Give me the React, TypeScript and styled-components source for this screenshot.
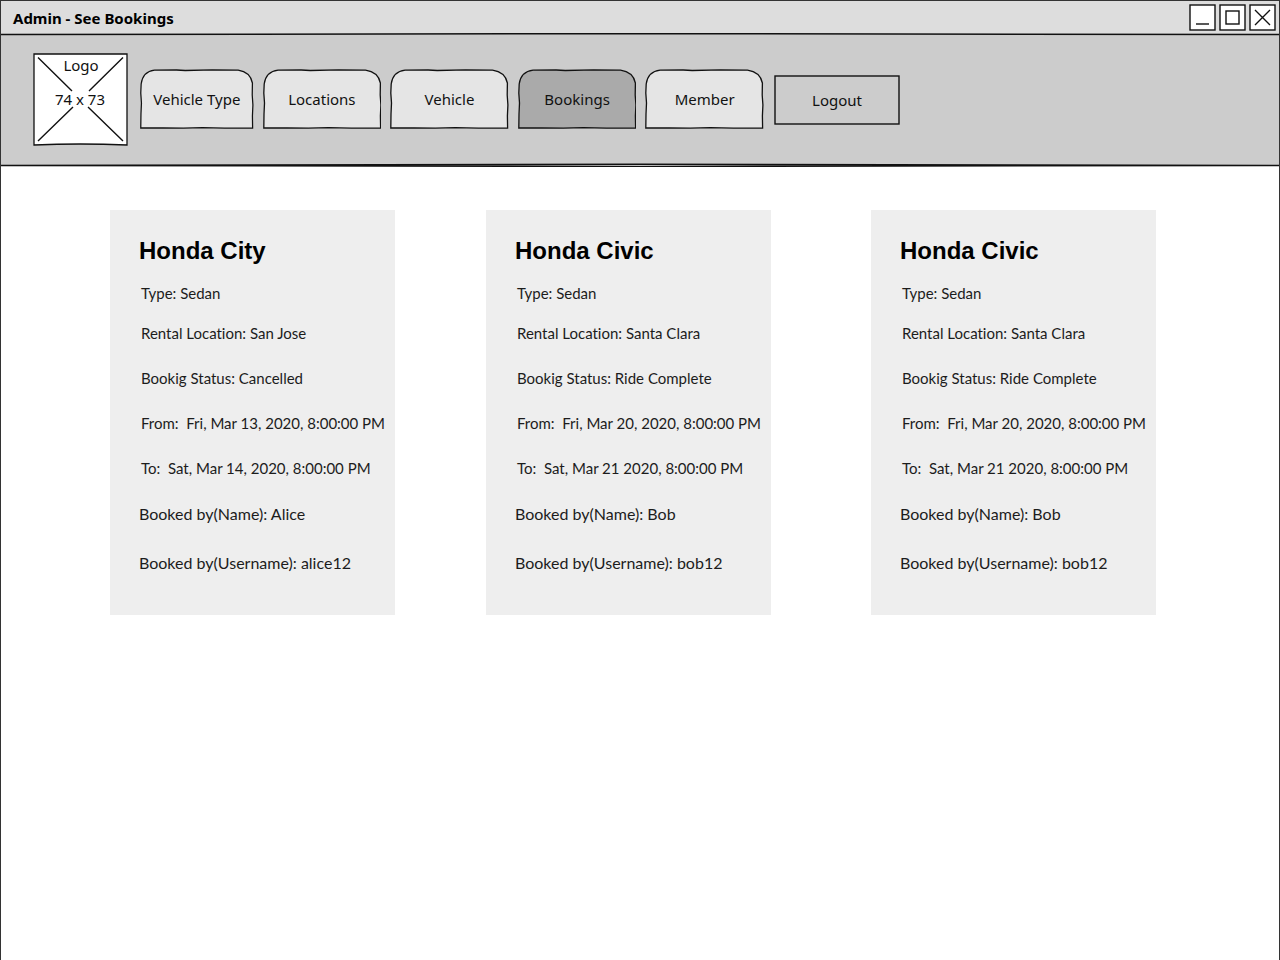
import React from "react";
import styled, { createGlobalStyle } from "styled-components";

const hand = `"Noto Sans", "Open Sans", sans-serif`;
const ink = "#111";

const GlobalStyle = createGlobalStyle`
  *, *::before, *::after { box-sizing: border-box; }
  body { margin: 0; background: #fff; color: #000; font-family: Lato, sans-serif; }
`;

const Window = styled.div`
  display: flex;
  flex-direction: column;
  min-height: 100vh;
  border: 1px solid #333;
  border-bottom: 0;
`;

const TitleBar = styled.header`
  display: flex;
  align-items: center;
  justify-content: space-between;
  height: 33px;
  padding: 0 3px 0 12px;
  background: #ddd;
`;

const WindowTitle = styled.h1`
  margin: 0;
  font: 700 15px/20px ${hand};
`;

const WindowControls = styled.div`
  display: flex;
  gap: 3px;
`;

const ControlButton = styled.button`
  display: block;
  width: 27px;
  height: 27px;
  padding: 0;
  border: 0;
  background: none;
  svg { display: block; }
`;

const Rule = styled.svg`
  display: block;
  width: 100%;
  height: 4px;
  margin: -2px 0;
  position: relative;
  fill: none;
  stroke: ${ink};
`;

const NavBar = styled.nav`
  display: flex;
  align-items: center;
  gap: 10px;
  height: 131px;
  padding: 0 32px;
  background: #ccc;
`;

const Logo = styled.svg`
  flex: none;
  width: 95px;
  height: 94px;
  margin-right: 2px;
  font: 400 15px ${hand};
`;

const TabList = styled.div`
  display: flex;
  flex: 0 1 624px;
  gap: 9px;
  padding-bottom: 2px;
`;

const Tab = styled.button<{ $wide?: boolean }>`
  display: grid;
  place-items: center;
  flex: ${(p) => (p.$wide ? "118 1 0" : "113 1 0")};
  height: 60px;
  padding: 0;
  border: 0;
  background: none;
  color: ${ink};
  font: 400 15px/20px ${hand};
  white-space: nowrap;
  > * { grid-area: 1 / 1; }
`;

const TabShape = styled.svg<{ $active?: boolean }>`
  width: 100%;
  height: 60px;
  fill: ${(p) => (p.$active ? "#aaa" : "#e5e5e5")};
  stroke: ${ink};
  stroke-width: 1.3;
`;

const LogoutButton = styled.button`
  flex: 0 1 126px;
  height: 50px;
  padding: 0;
  border: 0;
  background: none;
  color: ${ink};
  font: 400 15px/20px ${hand};
  display: grid;
  place-items: center;
  > * { grid-area: 1 / 1; }
`;

const LogoutShape = styled.svg`
  width: 100%;
  height: 50px;
  fill: #ccc;
  stroke: ${ink};
  stroke-width: 1.4;
`;

const Board = styled.main`
  display: grid;
  grid-template-columns: 376fr 385fr 408fr;
  padding: 45px 0 44px 109px;
`;

const Card = styled.article`
  display: flex;
  flex-direction: column;
  gap: 25px;
  width: 285px;
  height: 405px;
  padding: 27px 0 0 31px;
  background: #eee;
`;

const CarName = styled.h2`
  margin: 0 0 -2px -2px;
  font: 700 24px/28px "Liberation Sans", sans-serif;
`;

const Facts = styled.div<{ $gap: number; $large?: boolean }>`
  display: flex;
  flex-direction: column;
  gap: ${(p) => p.$gap}px;
  margin: ${(p) => (p.$large ? "1px 0 0 -2px" : "0")};
  color: #1c1c1c;
  font-size: ${(p) => (p.$large ? 16 : 15)}px;
  font-variant-ligatures: none;
  line-height: 20px;
  white-space: pre;
  ${CarName} { color: #000; }
`;

const Fact = styled.p`
  margin: 0;
`;

type Booking = {
  car: string;
  location: string;
  status: string;
  from: string;
  to: string;
  name: string;
  username: string;
};

const civic: Booking = {
  car: "Honda Civic",
  location: "Santa Clara",
  status: "Ride Complete",
  from: "Fri, Mar 20, 2020, 8:00:00 PM",
  to: "Sat, Mar 21 2020, 8:00:00 PM",
  name: "Bob",
  username: "bob12",
};

const bookings: Booking[] = [
  {
    car: "Honda City",
    location: "San Jose",
    status: "Cancelled",
    from: "Fri, Mar 13, 2020, 8:00:00 PM",
    to: "Sat, Mar 14, 2020, 8:00:00 PM",
    name: "Alice",
    username: "alice12",
  },
  civic,
  civic,
];

const tabs = ["Vehicle Type", "Locations", "Vehicle", "Bookings", "Member"];

function NavTab({ label, first, active }: { label: string; first: boolean; active: boolean }) {
  return (
    <Tab $wide={!first} type="button" aria-current={active ? "page" : undefined}>
      <TabShape $active={active} viewBox="0 0 118 60" preserveAspectRatio="none" aria-hidden="true">
        <path d="M.8 59 L1 45 L1.5 34 L.8 24 L1.2 15 Q3 2.500 15 1.2 L38 1 L47 1.5 L75 .9 L102 1.2 Q114.500 3 116.8 14 L116.6 26 L117.3 36 L116.8 47 L117 59 L88 59.2 L65 58.7 L45 59.2 L24 58.8 Z" />
      </TabShape>
      <span>{label}</span>
    </Tab>
  );
}

function Control({ label, children }: { label: string; children: React.ReactNode }) {
  return (
    <ControlButton type="button" aria-label={label}>
      <svg width="27" height="27" viewBox="0 0 27 27" fill="none" stroke={ink} strokeWidth="1.4">
        <rect x="1" y="1" width="25" height="25" fill="#fff" />
        {children}
      </svg>
    </ControlButton>
  );
}

export default function App() {
  return (
    <>
      <GlobalStyle />
      <Window>
        <TitleBar>
          <WindowTitle>Admin - See Bookings</WindowTitle>
          <WindowControls>
            <Control label="Minimize"><path d="M7 20H20" /></Control>
            <Control label="Maximize"><rect x="7" y="7" width="13" height="13" /></Control>
            <Control label="Close"><path d="M6 6L21 21M21 6L6 21" /></Control>
          </WindowControls>
        </TitleBar>
        <Rule viewBox="0 0 1278 4" preserveAspectRatio="none" aria-hidden="true">
          <path d="M0 2.5Q639 .8 1278 2.5" strokeWidth="1.5" />
        </Rule>
        <NavBar>
          <Logo viewBox="0 0 95 94" role="img" aria-label="Logo">
            <path d="M1 1H94V92Q47 90 1 92Z" fill="#fff" stroke={ink} strokeWidth="1.3" />
            <path d="M5 4.500L39 38M90 4.500L56 38M5 88L40 54M90 88L55 54" stroke={ink} strokeWidth="1.4" />
            <text x="48" y="18" textAnchor="middle" fill={ink}>Logo</text>
            <text x="47" y="52" textAnchor="middle" fill={ink}>74 x 73</text>
          </Logo>
          <TabList>
            {tabs.map((t, i) => (
              <NavTab key={t} label={t} first={i === 0} active={t === "Bookings"} />
            ))}
          </TabList>
          <LogoutButton type="button">
            <LogoutShape viewBox="0 0 126 50" preserveAspectRatio="none" aria-hidden="true">
              <rect x="1" y="1" width="124" height="48" />
            </LogoutShape>
            <span>Logout</span>
          </LogoutButton>
        </NavBar>
        <Rule viewBox="0 0 1278 4" preserveAspectRatio="none" aria-hidden="true">
          <path d="M0 2.500Q639 0 1278 2.500M0 2.500Q639 4.500 1278 2.500" strokeWidth="1.4" />
        </Rule>
        <Board>
          {bookings.map((b, i) => (
            <Card key={i}>
              <Facts $gap={20}>
                <CarName>{b.car}</CarName>
                <Fact>Type: Sedan</Fact>
                <Fact>Rental Location: {b.location}</Fact>
              </Facts>
              <Facts $gap={25}>
                <Fact>Bookig Status: {b.status}</Fact>
                <Fact>{"From:  " + b.from}</Fact>
                <Fact>{"To:  " + b.to}</Fact>
              </Facts>
              <Facts $gap={29} $large>
                <Fact>Booked by(Name): {b.name}</Fact>
                <Fact>Booked by(Username): {b.username}</Fact>
              </Facts>
            </Card>
          ))}
        </Board>
      </Window>
    </>
  );
}
